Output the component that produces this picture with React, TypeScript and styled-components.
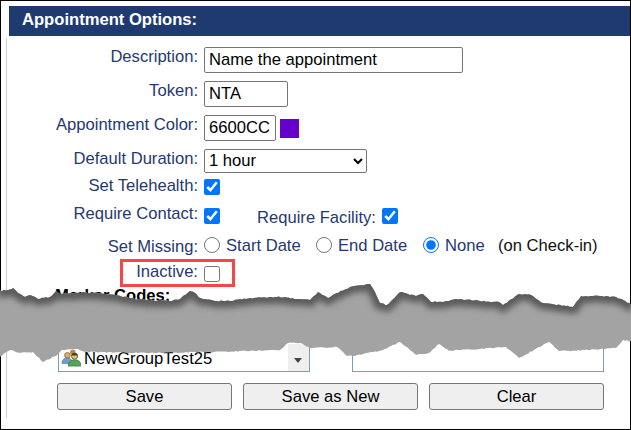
import React from "react"
import styled, { createGlobalStyle } from "styled-components"

const GlobalStyle = createGlobalStyle`
  html, body {
    margin: 0;
    padding: 0;
    background: #fff;
    font-family: "Liberation Sans", Arial, sans-serif;
  }
`

type Pt = [number, number]

const topEdge: Pt[] = [
  [-2, 291], [8, 290], [13, 288], [18, 293], [25, 297], [30, 295], [38, 299], [50, 297], [56, 291], [60, 294],
  [80, 293], [100, 293], [115, 295], [135, 299], [150, 300], [170, 301], [180, 299], [190, 291], [195, 293],
  [200, 298], [215, 301], [230, 301], [250, 298], [277, 297], [300, 299], [310, 300], [318, 292], [328, 298],
  [337, 293], [350, 287], [370, 284], [375, 292], [380, 303], [387, 305], [400, 292], [416, 296], [423, 294],
  [431, 302], [449, 301], [456, 299], [480, 301], [499, 302], [503, 305], [519, 294], [531, 295], [543, 303],
  [566, 306], [573, 307], [581, 296], [600, 296], [616, 297], [633, 305],
]

const bottomEdge: Pt[] = [
  [633, 342], [623, 340], [616, 348], [590, 350], [559, 351], [549, 342], [534, 350], [519, 358], [506, 347],
  [480, 349], [459, 350], [449, 351], [439, 344], [429, 353], [416, 355], [410, 350], [400, 342], [383, 350],
  [353, 356], [347, 356], [337, 347], [310, 348], [300, 343], [288, 343], [280, 350], [250, 351], [210, 352],
  [150, 353], [85, 352], [78, 349], [62, 350], [56, 356], [43, 362], [33, 352], [20, 353], [10, 350], [-2, 358],
]

// walk between the anchors and wobble a little, so the edge reads as torn paper
const roughen = (points: Pt[]) => {
  const out: string[] = []
  let seed = 7
  points.forEach(([x, y], i) => {
    const next = points[i + 1]
    if (!next) {
      out.push(`${x},${y}`)
      return
    }
    const steps = Math.max(1, Math.round(Math.abs(next[0] - x) / 2))
    for (let s = 0; s < steps; s++) {
      seed = (seed * 31 + 11) % 101
      const wobble = s === 0 ? 0 : (seed / 101 - 0.5) * 1.2
      out.push(`${(x + ((next[0] - x) * s) / steps).toFixed(1)},${(y + ((next[1] - y) * s) / steps + wobble).toFixed(1)}`)
    }
  })
  return out
}

const topPoints = roughen(topEdge)
const bandPoints = [...topPoints, ...roughen(bottomEdge)].join(" ")

const TornBand = () => (
  <BandSvg viewBox="0 0 631 430">
    <defs>
      <clipPath id="band-clip">
        <polygon points={bandPoints} />
      </clipPath>
      <filter id="band-blur" x="-5%" y="-50%" width="110%" height="200%">
        <feGaussianBlur stdDeviation="3" />
      </filter>
    </defs>
    <polygon points={bandPoints} fill="#a3a3a3" />
    <g clipPath="url(#band-clip)">
      <polyline points={topPoints.join(" ")} fill="none" stroke="#5a5a5a" strokeWidth="13" filter="url(#band-blur)" />
    </g>
  </BandSvg>
)

const GroupIcon = () => (
  <svg width="20" height="18" viewBox="0 0 22 20">
    <circle cx="13" cy="3.5" r="3" fill="#b08a4a" />
    <circle cx="7" cy="7" r="3.2" fill="#d8ad6c" stroke="#6b5a2c" strokeWidth="0.7" />
    <path d="M1 15c0-3.5 3-5 6-5s5 1.5 5 5v1H1z" fill="#6f9fd0" stroke="#47688c" strokeWidth="0.6" />
    <circle cx="15" cy="8" r="3.4" fill="#e3bb84" stroke="#4d3d1c" strokeWidth="0.8" />
    <path d="M15 4.400c-2 0-3.400 1.300-3.400 3 1.400-.3 4.800-.2 6.800 0 0-1.700-1.400-3-3.400-3z" fill="#4d3d1c" />
    <path d="M8 18c0-4 3.500-6 7-6s7 2 7 6v1H8z" fill="#57a55a" stroke="#2f6d33" strokeWidth="0.7" />
  </svg>
)

const App = () => (
  <Page>
    <GlobalStyle />
    <Frame>
      <Header>Appointment Options:</Header>
      <Panel>
        <Row $height={26} $after={8}>
          <Label $lift={3}>Description:</Label>
          <TextInput $width={259} defaultValue="Name the appointment" />
        </Row>
        <Row $height={26} $after={8}>
          <Label $lift={3}>Token:</Label>
          <TextInput $width={84} defaultValue="NTA" />
        </Row>
        <Row $height={26} $after={8}>
          <Label $lift={3}>Appointment Color:</Label>
          <TextInput $width={72} defaultValue="6600CC" />
          <Swatch />
        </Row>
        <Row $height={24} $after={6}>
          <Label $lift={2}>Default Duration:</Label>
          <DurationSelect defaultValue="1 hour">
            <option>1 hour</option>
          </DurationSelect>
        </Row>
        <Row $height={16} $after={13}>
          <Label $lift={1}>Set Telehealth:</Label>
          <Check defaultChecked />
        </Row>
        <Row $height={16} $after={13}>
          <Label $lift={2}>Require Contact:</Label>
          <Check defaultChecked />
          <InlineLabel>Require Facility:</InlineLabel>
          <Check defaultChecked />
        </Row>
        <Row $height={16} $after={13}>
          <Label $lift={-2}>Set Missing:</Label>
          <Radio name="missing" />
          <RadioText $width={96}>Start Date</RadioText>
          <Radio name="missing" />
          <RadioText $width={91}>End Date</RadioText>
          <Radio name="missing" defaultChecked />
          <RadioText $width={44}>None</RadioText>
          <Note>(on Check-in)</Note>
        </Row>
        <Row $height={16} $after={4}>
          <Label $lift={2}>Inactive:</Label>
          <Check />
          <Highlight />
        </Row>
        <SectionTitle>Marker Codes:</SectionTitle>
        <Bottom>
          <ComboRow>
            <Combo>
              <GroupIcon />
              <ComboText>NewGroupTest25</ComboText>
              <ComboButton />
            </Combo>
            <Field />
          </ComboRow>
          <Buttons>
            <ActionButton>Save</ActionButton>
            <ActionButton>Save as New</ActionButton>
            <ActionButton>Clear</ActionButton>
          </Buttons>
        </Bottom>
      </Panel>
    </Frame>
    <TornBand />
  </Page>
)

const Page = styled.div`
  position: relative;
  width: 631px;
  height: 430px;
  overflow: hidden;
`

const Frame = styled.div`
  box-sizing: border-box;
  width: 631px;
  height: 430px;
  border: 1px solid #000;
  padding: 5px 0 0 5px;
`

const Header = styled.div`
  box-sizing: border-box;
  height: 30px;
  margin-left: 3px;
  padding-left: 13px;
  background: #1e3a70;
  color: #fff;
  font-size: 16.6px;
  font-weight: bold;
  line-height: 28px;
`

const Panel = styled.div`
  box-sizing: border-box;
  height: 380px;
  margin-top: 2px;
  padding-top: 9px;
  border-left: 1px solid #ccc;
`

const Row = styled.div<{ $height: number; $after: number }>`
  position: relative;
  display: flex;
  align-items: center;
  height: ${p => p.$height}px;
  margin-bottom: ${p => p.$after}px;
  font-size: 16.6px;
  white-space: nowrap;
`

const Label = styled.span<{ $lift: number }>`
  flex: none;
  width: 191px;
  margin-right: 6px;
  margin-bottom: ${p => p.$lift * 2}px;
  text-align: right;
  color: #24396f;
`

const TextInput = styled.input.attrs({ type: "text" })<{ $width: number }>`
  box-sizing: border-box;
  width: ${p => p.$width}px;
  height: 26px;
  margin: 0;
  padding: 0 4px 1px;
  border: 1px solid #767676;
  border-radius: 2px;
  font: 16.6px "Liberation Sans", Arial, sans-serif;
  color: #000;
`

const Swatch = styled.div`
  width: 19px;
  height: 19px;
  margin-left: 4px;
  background: #6600cc;
`

const DurationSelect = styled.select`
  box-sizing: border-box;
  width: 163px;
  height: 24px;
  margin: 0;
  padding: 0 0 2px;
  border: 1px solid #767676;
  border-radius: 2px;
  background: #fff;
  font: 16.6px "Liberation Sans", Arial, sans-serif;
  color: #000;
`

const Check = styled.input.attrs({ type: "checkbox" })`
  flex: none;
  width: 16px;
  height: 16px;
  margin: 0;
`

const Radio = styled.input.attrs({ type: "radio" })`
  flex: none;
  width: 16px;
  height: 16px;
  margin: 0;
`

const InlineLabel = styled.span`
  flex: none;
  width: 118px;
  margin-left: 37px;
  margin-right: 7px;
  margin-top: 4px;
  color: #24396f;
`

const RadioText = styled.span<{ $width: number }>`
  flex: none;
  box-sizing: border-box;
  width: ${p => p.$width}px;
  padding-left: 6px;
  margin-top: 2px;
  color: #24396f;
`

const Note = styled.span`
  margin-left: 15px;
  margin-top: 2px;
  color: #111;
`

const Highlight = styled.div`
  position: absolute;
  left: 113px;
  top: -7px;
  box-sizing: border-box;
  width: 115px;
  height: 28px;
  border: 3px solid #f4474a;
  pointer-events: none;
`

const SectionTitle = styled.div`
  height: 58px;
  padding-left: 48px;
  font-size: 16.6px;
  font-weight: bold;
  line-height: 19px;
  color: #000;
`

const Bottom = styled.div`
  padding-left: 50px;
`

const ComboRow = styled.div`
  display: flex;
  gap: 42px;
  height: 28px;
  padding-left: 1px;
`

const Combo = styled.div`
  position: relative;
  box-sizing: border-box;
  display: flex;
  align-items: center;
  width: 252px;
  padding-left: 2px;
  padding-top: 3px;
  border: 1px solid #7f9db9;
  border-top: 0;

  svg {
    margin-top: -3px;
  }
`

const ComboText = styled.span`
  margin-left: 3px;
  font-size: 16.6px;
  color: #000;
`

const ComboButton = styled.div`
  position: absolute;
  right: 0;
  top: 0;
  bottom: 0;
  width: 21px;
  background: #efefef;

  &::after {
    content: "";
    position: absolute;
    left: 6px;
    top: 14px;
    border-left: 4.5px solid transparent;
    border-right: 4.5px solid transparent;
    border-top: 5px solid #444;
  }
`

const Field = styled.div`
  box-sizing: border-box;
  width: 252px;
  border: 1px solid #7f9db9;
  border-top: 0;
`

const Buttons = styled.div`
  display: flex;
  gap: 11px;
  margin-top: 11px;
`

const ActionButton = styled.button`
  box-sizing: border-box;
  width: 175px;
  height: 27px;
  padding: 0;
  background: #efefef;
  border: 1px solid #767676;
  border-radius: 3px;
  font: 16.6px "Liberation Sans", Arial, sans-serif;
  color: #000;
`

const BandSvg = styled.svg`
  position: absolute;
  left: 0;
  top: 0;
  width: 631px;
  height: 430px;
  pointer-events: none;
`

export default App
